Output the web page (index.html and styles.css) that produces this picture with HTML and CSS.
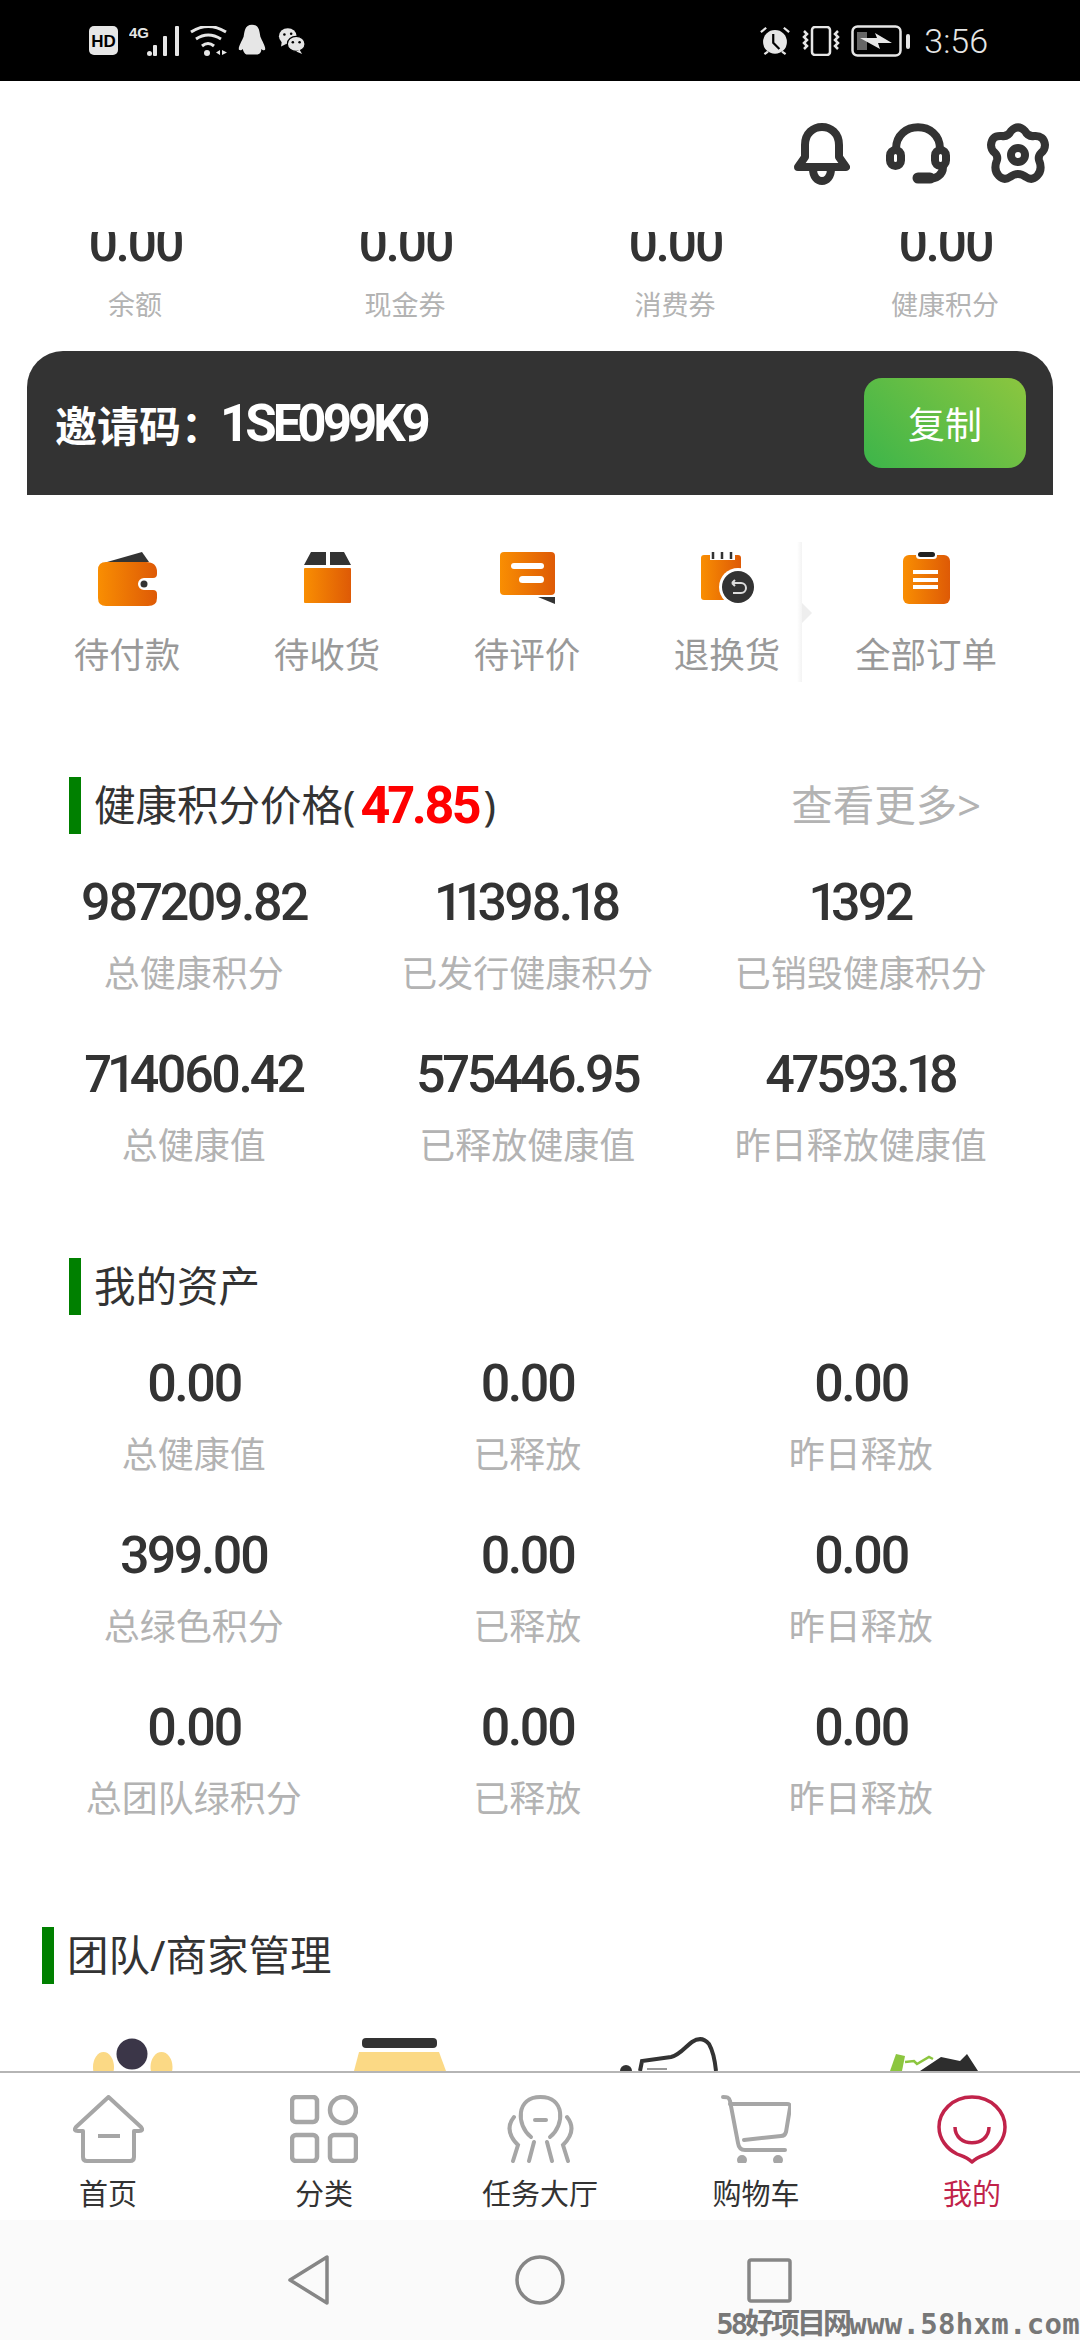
FILE: index.html
```html
<!DOCTYPE html>
<html lang="zh">

<head>
    <meta charset="UTF-8">
    <meta name="viewport" content="width=device-width, initial-scale=1.0">
    <title>我的</title>
    <link rel="stylesheet" href="styles.css">
</head>

<body>
    <div class="status-bar">
        <div class="status-left">
            <svg width="29" height="29" viewBox="0 0 29 29">
                <rect width="29" height="29" rx="5" fill="#e6e6e6" />
                <text x="14.500" y="20.500" text-anchor="middle" class="st-hd-text">HD</text>
            </svg>
            <svg width="50" height="30" viewBox="0 0 50 30">
                <text x="0" y="12" class="st-4g">4G</text>
                <rect x="18" y="25" width="5" height="5" rx="2.500" fill="#e6e6e6" />
                <rect x="24" y="19" width="4" height="11" rx="1" fill="#e6e6e6" />
                <rect x="34" y="10" width="4" height="20" rx="1" fill="#e6e6e6" />
                <rect x="46" y="0" width="4" height="30" rx="1" fill="#e6e6e6" />
            </svg>
            <svg width="37" height="30" viewBox="0 0 37 30" fill="none" stroke="#e6e6e6" stroke-width="3">
                <path d="M1 6Q18 -5 36 6" />
                <path d="M6 13Q18 5 31 13" />
                <path d="M12 20Q18 15 24 20" />
                <circle cx="17" cy="27" r="3" fill="#e6e6e6" stroke="none" />
                <path d="M30 24l-4 2.500 4 2.500zM32 24l5 2.500-5 2.500z" fill="#e6e6e6" stroke="none" />
            </svg>
            <svg width="28" height="33" viewBox="0 0 30 34">
                <path d="M15 0C7 0 7 8 6 13C4 18 0 24 1 27C3 28 4 27 5 26C6 29 7 31 9 32L21 32C24 31 25 29 25 26C26 27 28 28 29 27C30 24 26 18 24 13C23 8 23 0 15 0Z" fill="#e6e6e6" />
            </svg>
            <svg width="30" height="27" viewBox="0 0 32 32">
                <ellipse cx="11" cy="11" rx="10.500" ry="9.500" fill="#e6e6e6" />
                <path d="M4 17l-1 6 6-3z" fill="#e6e6e6" />
                <ellipse cx="21" cy="20" rx="10.500" ry="9" fill="#e6e6e6" stroke="#000" stroke-width="1.500" />
                <path d="M25 27l3 5-7-3z" fill="#e6e6e6" />
                <circle cx="7" cy="9" r="1.500" fill="#000" />
                <circle cx="15" cy="8" r="1.500" fill="#000" />
                <circle cx="17" cy="18" r="1.500" fill="#000" />
                <circle cx="25" cy="18" r="1.500" fill="#000" />
            </svg>
        </div>
        <div class="status-right">
            <svg width="32" height="30" viewBox="0 0 34 34">
                <circle cx="17" cy="18" r="13.500" fill="#e6e6e6" />
                <path d="M15 9v10l7 7" fill="none" stroke="#000" stroke-width="2.500" />
                <path d="M1 7l6-5M33 7l-6-5M5 32l4-3M29 32l-4-3" stroke="#e6e6e6" stroke-width="2.500" fill="none" />
            </svg>
            <svg width="38" height="30" viewBox="0 0 38 30" fill="none" stroke="#e6e6e6" stroke-width="2.500">
                <rect x="10" y="1" width="18" height="28" rx="3" />
                <path d="M2 5l3 3-3 3 3 3-3 3 3 3-3 3" />
                <path d="M36 5l-3 3 3 3-3 3 3 3-3 3 3 3" />
            </svg>
            <svg width="59" height="32" viewBox="0 0 59 32">
                <rect x="1.500" y="1.500" width="48" height="29" rx="5" fill="none" stroke="#e6e6e6" stroke-width="2.500" />
                <rect x="6" y="7" width="10" height="18" fill="#666" />
                <path d="M9 13L26 13 24 8 41 18 27 18 29 24Z" fill="#e6e6e6" />
                <rect x="55" y="9" width="4" height="15" rx="2" fill="#e6e6e6" />
            </svg>
            <span class="status-time">3:56</span>
        </div>
    </div>

    <div class="page">
        <div class="top-actions">
            <!-- bell -->
            <svg width="56" height="62" viewBox="0 0 56 62" fill="none" stroke="#333" stroke-width="8" stroke-linejoin="round">
                <path d="M11 22C11 -2 45 -2 45 22V34L52 44H4L11 34Z" />
                <path d="M19 46C19 62 37 62 37 46" />
            </svg>
            <!-- headset -->
            <svg width="65" height="62" viewBox="0 0 65 62" fill="none" stroke="#333" stroke-width="8">
                <path d="M10 26C10 -3 54 -3 54 26" />
                <rect x="4" y="27" width="11" height="16" rx="5.500" />
                <rect x="49" y="27" width="11" height="16" rx="5.500" />
                <path d="M57 44C57 52 50 56 42 56" />
                <path d="M32 55H44" stroke-width="11" stroke-linecap="round" />
            </svg>
            <!-- gear -->
            <svg width="62" height="62" viewBox="0 0 62 62" fill="none" stroke="#333" stroke-width="8" stroke-linejoin="round">
                <path d="M24 8Q31 1 38 8Q41 14 47 13Q57 12 58 22Q58 27 54 30Q51 33 52 37Q56 47 50 53Q45 58 39 54Q31 48 23 54Q17 58 12 53Q6 47 10 37Q11 33 8 30Q4 27 4 22Q5 12 15 13Q21 14 24 8Z" />
                <circle cx="31" cy="32" r="7" />
            </svg>
        </div>

        <div class="balance-row">
            <div class="balance-item">
                <div class="balance-clip"><span class="balance-num">0.00</span></div>
                <div class="balance-label">余额</div>
            </div>
            <div class="balance-item">
                <div class="balance-clip"><span class="balance-num">0.00</span></div>
                <div class="balance-label">现金券</div>
            </div>
            <div class="balance-item">
                <div class="balance-clip"><span class="balance-num">0.00</span></div>
                <div class="balance-label">消费券</div>
            </div>
            <div class="balance-item">
                <div class="balance-clip"><span class="balance-num">0.00</span></div>
                <div class="balance-label">健康积分</div>
            </div>
        </div>

        <div class="invite">
            <span class="invite-code">邀请码：<span class="invite-value">1SE099K9</span></span>
            <span class="copy-btn">复制</span>
        </div>

        <div class="orders">
            <div class="order-item">
                <svg width="59" height="54" viewBox="0 0 59 54">
                    <path d="M9 10L44 0 51 10Z" fill="#333" />
                    <path d="M8 10H48Q59 10 59 20V22Q59 26 55 26H46A6 6 0 0 0 46 38H55Q59 38 59 42V46Q59 54 50 54H8Q0 54 0 46V18Q0 10 8 10Z" fill="url(#org)" />
                    <circle cx="46" cy="32" r="3.500" fill="#333" />
                </svg>
                <span>待付款</span>
            </div>
            <div class="order-item">
                <svg width="47" height="54" viewBox="0 0 47 54">
                    <path d="M7 0H22V13H0ZM26 0H40L47 13H26Z" fill="#333" />
                    <rect x="0" y="16" width="47" height="35" rx="1" fill="url(#org)" />
                </svg>
                <span>待收货</span>
            </div>
            <div class="order-item">
                <svg width="55" height="54" viewBox="0 0 55 54">
                    <rect width="55" height="43" rx="4" fill="url(#org)" />
                    <rect x="11" y="11" width="33" height="6" rx="3" fill="#fff" />
                    <rect x="19" y="24" width="25" height="7" rx="3.500" fill="#fff" />
                    <path d="M38 45H55V52Z" fill="#333" />
                </svg>
                <span>待评价</span>
            </div>
            <div class="order-item">
                <svg width="53" height="54" viewBox="0 0 53 54">
                    <path d="M3 3H37Q40 3 40 6V48H3Q0 48 0 45V6Q0 3 3 3Z" fill="url(#org)" />
                    <rect x="9" y="0" width="25" height="8" fill="#fff" />
                    <path d="M12 0v7M21 0v7M30 0v7" stroke="#333" stroke-width="2.500" />
                    <circle cx="37" cy="35" r="19" fill="#fff" />
                    <circle cx="37" cy="35" r="16" fill="#333" />
                    <path d="M31 31h9a5 5 0 0 1 0 10h-8M31 31l3-3M31 31l3 3" fill="none" stroke="#ddd" stroke-width="2" />
                </svg>
                <span>退换货</span>
            </div>
            <div class="order-item order-all">
                <svg width="47" height="54" viewBox="0 0 47 54">
                    <rect x="0" y="3" width="47" height="49" rx="6" fill="url(#org)" />
                    <rect x="13" y="0" width="21" height="7" rx="3.500" fill="#fff" />
                    <rect x="15" y="0" width="17" height="5" rx="2.500" fill="#222" />
                    <rect x="10" y="18" width="25" height="4" fill="#fff" />
                    <rect x="10" y="26" width="25" height="4" fill="#fff" />
                    <rect x="10" y="33" width="25" height="4" fill="#fff" />
                </svg>
                <span>全部订单</span>
            </div>
        </div>

        <div class="section-head section-first">
            <h2 class="section-title">健康积分价格(<b>47.85</b>)</h2>
            <span class="more-link">查看更多&gt;</span>
        </div>
        <div class="stat-grid">
            <div class="stat"><div class="stat-num">987209.82</div><div class="stat-label">总健康积分</div></div>
            <div class="stat"><div class="stat-num">11398.18</div><div class="stat-label">已发行健康积分</div></div>
            <div class="stat"><div class="stat-num">1392</div><div class="stat-label">已销毁健康积分</div></div>
            <div class="stat"><div class="stat-num">714060.42</div><div class="stat-label">总健康值</div></div>
            <div class="stat"><div class="stat-num">575446.95</div><div class="stat-label">已释放健康值</div></div>
            <div class="stat"><div class="stat-num">47593.18</div><div class="stat-label">昨日释放健康值</div></div>
        </div>

        <div class="section-head section-second">
            <h2 class="section-title">我的资产</h2>
        </div>
        <div class="stat-grid">
            <div class="stat"><div class="stat-num">0.00</div><div class="stat-label">总健康值</div></div>
            <div class="stat"><div class="stat-num">0.00</div><div class="stat-label">已释放</div></div>
            <div class="stat"><div class="stat-num">0.00</div><div class="stat-label">昨日释放</div></div>
            <div class="stat"><div class="stat-num">399.00</div><div class="stat-label">总绿色积分</div></div>
            <div class="stat"><div class="stat-num">0.00</div><div class="stat-label">已释放</div></div>
            <div class="stat"><div class="stat-num">0.00</div><div class="stat-label">昨日释放</div></div>
            <div class="stat"><div class="stat-num">0.00</div><div class="stat-label">总团队绿积分</div></div>
            <div class="stat"><div class="stat-num">0.00</div><div class="stat-label">已释放</div></div>
            <div class="stat"><div class="stat-num">0.00</div><div class="stat-label">昨日释放</div></div>
        </div>

        <div class="section-head section-third">
            <h2 class="section-title">团队/商家管理</h2>
        </div>
        <!-- these four are cut off by the tab bar -->
        <div class="manage-row">
            <svg width="270" height="34" viewBox="0 0 270 34">
                <ellipse cx="103.500" cy="30" rx="10.500" ry="15" fill="#fbd985" />
                <ellipse cx="161.500" cy="30" rx="11" ry="15" fill="#fbd985" />
                <circle cx="132" cy="17" r="15.500" fill="#3b3648" />
            </svg>
            <svg width="270" height="34" viewBox="0 0 270 34">
                <rect x="92" y="1" width="75" height="10" rx="4" fill="#333" />
                <path d="M89 15H169L176 34H84Z" fill="#fbd985" />
            </svg>
            <svg width="270" height="34" viewBox="0 0 270 34" fill="none" stroke="#333" stroke-width="4">
                <path d="M100 34L102 24 131 20C140 18 146 9 152 5C158 1 164 1 169 7C173 14 175 24 176 34" />
                <path d="M107 32H127" stroke="#999" stroke-width="2" />
                <circle cx="86" cy="34" r="6" fill="#333" stroke="none" />
            </svg>
            <svg width="270" height="34" viewBox="0 0 270 34">
                <path d="M80 34L86 17 95 19 92 34Z" fill="#8cc63f" />
                <path d="M95 25L104 24 107 27 119 20 123 22" fill="none" stroke="#8cc63f" stroke-width="2.500" />
                <path d="M110 34L131 20 150 24 157 17 168 34Z" fill="#2d2d2d" />
            </svg>
        </div>
    </div>

    <nav class="tabbar">
        <div class="tab">
            <svg width="71" height="68" viewBox="0 0 71 68" fill="none" stroke="#a6a6a6" stroke-width="4" stroke-linejoin="round">
                <path d="M35.500 2L3 32Q0 36 5 36H10V62Q10 66 14 66H57Q61 66 61 62V36H66Q71 36 68 32Z" />
                <path d="M25 41H47" />
            </svg>
            <span>首页</span>
        </div>
        <div class="tab">
            <svg width="68" height="68" viewBox="0 0 68 68" fill="none" stroke="#a6a6a6" stroke-width="4.500">
                <rect x="2" y="2" width="25" height="25" rx="4" />
                <circle cx="53" cy="15" r="13" />
                <rect x="2" y="40" width="25" height="26" rx="4" />
                <rect x="40" y="40" width="26" height="26" rx="4" />
            </svg>
            <span>分类</span>
        </div>
        <div class="tab">
            <svg width="69" height="68" viewBox="0 0 69 68" fill="none" stroke="#a6a6a6" stroke-width="4" stroke-linecap="round">
                <path d="M25 42C10 30 10 2 34.500 2C59 2 59 30 44 42" />
                <path d="M29 25H40" />
                <path d="M8 22C0 32 4 42 12 50L7 66" />
                <path d="M61 22C69 32 65 42 57 50L62 66" />
                <path d="M28 47L23 66" />
                <path d="M41 47L46 66" />
            </svg>
            <span>任务大厅</span>
        </div>
        <div class="tab">
            <svg width="70" height="68" viewBox="0 0 70 68" fill="none" stroke="#a6a6a6" stroke-width="4" stroke-linecap="round">
                <path d="M2 2C6 2 8 2 9 6L17 48Q18 55 24 55H64" />
                <path d="M9 9H66Q70 9 69 13L65 37Q64 41 60 41L23 45" />
                <circle cx="21" cy="65" r="3" fill="#a6a6a6" />
                <circle cx="57" cy="65" r="3" fill="#a6a6a6" />
            </svg>
            <span>购物车</span>
        </div>
        <div class="tab tab-active">
            <svg width="70" height="70" viewBox="0 0 70 70" fill="none" stroke="#c1234a" stroke-width="3.500" stroke-linejoin="round">
                <path d="M35 2C15 2 2 17 2 32C2 44 10 54 20 59C25 61 30 62 35 67C40 62 45 61 50 59C60 54 68 44 68 32C68 17 55 2 35 2Z" />
                <path d="M18 32C18 53 52 53 52 32" />
            </svg>
            <span>我的</span>
        </div>
    </nav>

    <div class="android-nav">
        <svg class="nav-back" width="41" height="50" viewBox="0 0 41 50" fill="none" stroke="#868686" stroke-width="3.500" stroke-linejoin="round">
            <path d="M39 2V48L2 25Z" />
        </svg>
        <svg width="50" height="50" viewBox="0 0 50 50" fill="none" stroke="#868686" stroke-width="3.500">
            <circle cx="25" cy="25" r="23" />
        </svg>
        <svg width="45" height="45" viewBox="0 0 45 45" fill="none" stroke="#868686" stroke-width="3.500">
            <rect x="2" y="2" width="41" height="41" rx="2" />
        </svg>
        <span class="watermark"><span class="watermark-cjk">58好项目网</span>www.58hxm.com</span>
    </div>

    <!-- shared orange gradient -->
    <svg class="defs" width="0" height="0">
        <defs>
            <linearGradient id="org" x1="0" y1="0" x2="1" y2="0">
                <stop offset="0" stop-color="#f98e02" />
                <stop offset="1" stop-color="#de5a06" />
            </linearGradient>
        </defs>
    </svg>
</body>

</html>
```

FILE: styles.css
```css
html,
body {
    margin: 0;
    padding: 0;
}

body {
    width: 1080px;
    height: 2340px;
    overflow: hidden;
    background-color: #fff;
    color: #333;
    font-family: "Noto Sans", "Noto Sans CJK SC", sans-serif;
    display: flex;
    flex-direction: column;
}

svg {
    display: block;
}

/* status bar */
.status-bar {
    height: 81px;
    flex: none;
    background-color: #000;
    color: #e6e6e6;
    display: flex;
    justify-content: space-between;
    align-items: center;
    padding: 0 92px 0 89px;
    box-sizing: border-box;
}

.status-left,
.status-right {
    display: flex;
    align-items: center;
    gap: 11px;
}

.st-hd-text {
    font-family: "Liberation Sans", sans-serif;
    font-size: 17px;
    font-weight: bold;
    fill: #000;
}

.st-4g {
    font-family: "Liberation Sans", sans-serif;
    font-size: 15px;
    font-weight: bold;
    fill: #e6e6e6;
}

.status-time {
    font-family: Roboto, sans-serif;
    font-size: 34px;
    font-weight: 300;
    margin-left: 3px;
}

/* page body */
.page {
    flex: 1;
    min-height: 0;
    overflow: hidden;
}

.top-actions {
    display: flex;
    justify-content: flex-end;
    gap: 36px;
    padding: 42px 31px 0 0;
}

.balance-row {
    display: grid;
    grid-template-columns: repeat(4, 270px);
    margin-top: 47px;
}

.balance-item {
    text-align: center;
}

.balance-clip {
    height: 32px;
    overflow: hidden;
}

.balance-num {
    display: block;
    font-family: Roboto, sans-serif;
    font-size: 52px;
    line-height: 52px;
    font-weight: 500;
    letter-spacing: -3px;
    font-variant-numeric: proportional-nums;
    margin-top: -14px;
}

.balance-label {
    font-size: 27px;
    line-height: 34px;
    color: #b3b3b3;
    margin-top: 24px;
}

.invite {
    margin: 29px 27px 0 27px;
    height: 144px;
    background-color: #333;
    border-radius: 36px 36px 0 0;
    display: flex;
    align-items: center;
    justify-content: space-between;
    padding: 0 27px 0 28px;
    box-sizing: border-box;
}

.invite-code {
    color: #fff;
    font-size: 42px;
    font-weight: 700;
    display: flex;
    align-items: center;
}

.invite-value {
    font-family: Roboto, sans-serif;
    font-size: 51px;
    letter-spacing: -4px;
    margin-left: -3px;
}

.copy-btn {
    width: 162px;
    height: 90px;
    border-radius: 18px;
    background: linear-gradient(45deg, #3cb54a, #8cc63f);
    color: #fff;
    font-size: 37px;
    display: flex;
    align-items: center;
    justify-content: center;
}

.orders {
    display: grid;
    grid-template-columns: repeat(4, 200px) 248px;
    padding: 57px 0 0 27px;
}

.order-item {
    display: flex;
    flex-direction: column;
    align-items: center;
    font-size: 35.500px;
    line-height: 42px;
    color: #999;
}

.order-item svg {
    margin-bottom: 27px;
}

.order-all {
    margin: 0 25px 0 -25px;
    position: relative;
}

/* faint fade and nub in front of the last item */
.order-all::before {
    content: "";
    position: absolute;
    left: -5px;
    top: -10px;
    width: 5px;
    height: 140px;
    background: linear-gradient(to right, #fff, #f3f3f3);
}

.order-all::after {
    content: "";
    position: absolute;
    left: 0;
    top: 51px;
    border-left: 10px solid #eee;
    border-top: 10px solid transparent;
    border-bottom: 10px solid transparent;
}

/* section headings */
.section-head {
    display: flex;
    justify-content: space-between;
    align-items: center;
    padding: 0 99px 0 69px;
}

.section-first {
    margin-top: 102px;
}

.section-second {
    margin-top: 87px;
}

.section-third {
    margin-top: 103px;
    padding-left: 42px;
}

.section-title {
    margin: 0;
    border-left: 12px solid #008000;
    padding-left: 13px;
    font-size: 41.500px;
    line-height: 57px;
    font-weight: 400;
    color: #333;
    display: flex;
    align-items: center;
}

.section-title b {
    font-family: Roboto, sans-serif;
    font-size: 52px;
    letter-spacing: -3px;
    font-variant-numeric: proportional-nums;
    color: #f00;
    font-weight: 700;
    margin: 0 5px;
}

.more-link {
    font-size: 41.500px;
    line-height: 57px;
    color: #b3b3b3;
}

.stat-grid {
    display: grid;
    grid-template-columns: repeat(3, 333.500px);
    padding-left: 27px;
    row-gap: 50px;
    margin-top: 43px;
}

.stat {
    text-align: center;
}

.stat-num {
    font-family: Roboto, sans-serif;
    font-size: 52px;
    line-height: 52px;
    font-weight: 500;
    letter-spacing: -3px;
    font-variant-numeric: proportional-nums;
    color: #333;
}

.stat-label {
    font-size: 36px;
    line-height: 50px;
    color: #b3b3b3;
    margin-top: 20px;
}

.manage-row {
    display: grid;
    grid-template-columns: repeat(4, 270px);
    margin-top: 53px;
}

/* bottom tab bar */
.tabbar {
    flex: none;
    height: 149px;
    border-top: 2px solid #b5b5b5;
    background-color: #fff;
    display: grid;
    grid-template-columns: repeat(5, 216px);
    box-sizing: border-box;
}

.tab {
    display: flex;
    flex-direction: column;
    align-items: center;
    padding-top: 22px;
    font-size: 29px;
    line-height: 36px;
    color: #333;
}

.tab svg {
    margin-bottom: 13px;
}

.tab-active {
    color: #c1234a;
}

.tab-active svg {
    margin-bottom: 11px;
}

/* system navigation */
.android-nav {
    flex: none;
    height: 120px;
    background-color: #fafafa;
    display: flex;
    justify-content: center;
    align-items: center;
    gap: 182px;
    position: relative;
}

.nav-back {
    margin-right: 4px;
}

.watermark {
    position: absolute;
    right: 0;
    bottom: 0;
    font-family: "DejaVu Sans Mono", "Noto Sans CJK SC", monospace;
    font-size: 29px;
    line-height: 32px;
    font-weight: 700;
    color: #777;
    white-space: nowrap;
    letter-spacing: 0.300px;
}

.watermark-cjk {
    letter-spacing: -3px;
}

.defs {
    position: absolute;
}
```
